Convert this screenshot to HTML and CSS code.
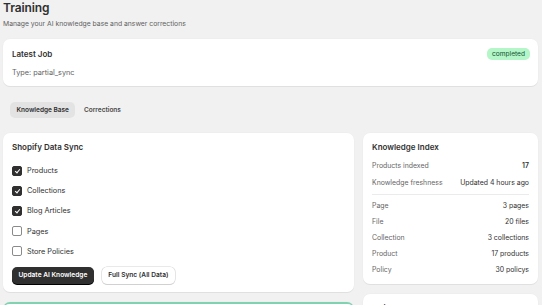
FILE: index.html
```html
<!DOCTYPE html>
<html lang="en">
<head>
  <meta charset="UTF-8">
  <title>Training</title>
  <link rel="stylesheet" href="styles.css">
</head>
<body>
  <div class="page">
    <div class="page-header">
      <h1>Training</h1>
      <p class="subtitle">Manage your AI knowledge base and answer corrections</p>
    </div>

    <div class="card job-card">
      <div class="card-head">
        <h2 class="card-title">Latest Job</h2>
        <span class="badge">completed</span>
      </div>
      <p class="muted">Type: partial_sync</p>
    </div>

    <div class="tabs">
      <button class="tab active">Knowledge Base</button>
      <button class="tab">Corrections</button>
    </div>

    <div class="layout">
      <div class="column">
        <div class="card">
          <h2 class="card-title">Shopify Data Sync</h2>
          <ul class="checks">
            <li><span class="box checked"></span>Products</li>
            <li><span class="box checked"></span>Collections</li>
            <li><span class="box checked"></span>Blog Articles</li>
            <li><span class="box"></span>Pages</li>
            <li><span class="box"></span>Store Policies</li>
          </ul>
          <div class="actions">
            <button class="btn primary">Update AI Knowledge</button>
            <button class="btn">Full Sync (All Data)</button>
          </div>
        </div>
        <div class="card banner"></div>
      </div>

      <div class="column">
        <div class="card index-card">
          <h2 class="card-title">Knowledge Index</h2>
          <dl class="stats">
            <div class="stat"><dt>Products indexed</dt><dd class="strong">17</dd></div>
            <div class="stat"><dt>Knowledge freshness</dt><dd>Updated 4 hours ago</dd></div>
          </dl>
          <hr class="divider">
          <dl class="stats compact">
            <div class="stat"><dt>Page</dt><dd>3 pages</dd></div>
            <div class="stat"><dt>File</dt><dd>20 files</dd></div>
            <div class="stat"><dt>Collection</dt><dd>3 collections</dd></div>
            <div class="stat"><dt>Product</dt><dd>17 products</dd></div>
            <div class="stat"><dt>Policy</dt><dd>30 policys</dd></div>
          </dl>
        </div>
        <div class="card insights">
          <h2 class="card-title">Insights</h2>
        </div>
      </div>
    </div>
  </div>
</body>
</html>
```

FILE: styles.css
```css
body{
  margin: 0;
  font-family: Inter, "Liberation Sans", sans-serif;
  color: #303030;
  background: #f1f1f1;
  overflow: hidden;
}
.page{
  padding: 0 4px 0 3px;
}
h1{
  margin: 0;
  font-size: 12px;
  font-weight: 600;
  line-height: 16px;
  letter-spacing: -0.1px;
}
.subtitle{
  margin: 3px 0 0;
  font-size: 6.8px;
  color: #616161;
}
.card{
  background: #fff;
  border-radius: 7px;
  box-shadow: 0 1px 0 #e0e0e0, 0 0 0 0.5px #ececec;
  padding: 9px 9px 8px;
}
.job-card{
  margin-top: 11px;
  padding-bottom: 9px;
}
.card-head{
  display: flex;
  justify-content: space-between;
  align-items: center;
}
.card-title{
  margin: 0;
  font-size: 8px;
  font-weight: 600;
  line-height: 11px;
}
.muted{
  margin: 8px 0 0;
  font-size: 7.3px;
  color: #616161;
}
.badge{
  font-size: 6.6px;
  background: #b4f6c7;
  color: #0c5132;
  padding: 2px 5px;
  border-radius: 5px;
  margin-right: -1px;
}
.tabs{
  display: flex;
  gap: 2px;
  margin: 16px 0 0 7px;
}
.tab{
  font-family: inherit;
  font-size: 6.5px;
  font-weight: 600;
  color: #4a4a4a;
  border: 0;
  background: none;
  padding: 4px 6.5px;
  border-radius: 5px;
  line-height: 8px;
}
.tab.active{
  background: #e3e3e3;
  color: #303030;
}
.layout{
  display: grid;
  grid-template-columns: 351px 1fr;
  gap: 9px;
  margin-top: 15px;
}
.column{
  display: flex;
  flex-direction: column;
  gap: 10px;
}
.checks{
  list-style: none;
  margin: 12px 0 0;
  padding: 0;
  display: flex;
  flex-direction: column;
  gap: 9.2px;
}
.checks li{
  display: flex;
  align-items: center;
  gap: 5px;
  font-size: 7.3px;
  line-height: 11px;
  color: #303030;
}
.box{
  width: 8px;
  height: 8px;
  border: 0.8px solid #8a8a8a;
  border-radius: 2px;
  background: #fff;
  position: relative;
}
.box.checked{
  background: #303030;
  border-color: #303030;
}
.box.checked::after{
  content: "";
  position: absolute;
  left: 2.6px;
  top: 1px;
  width: 2px;
  height: 4px;
  border: solid #fff;
  border-width: 0 1.2px 1.2px 0;
  transform: rotate(40deg);
}
.actions{
  display: flex;
  gap: 8px;
  margin-top: 10px;
}
.btn{
  font-family: inherit;
  font-size: 6.6px;
  font-weight: 600;
  line-height: 9px;
  padding: 4px 6.5px;
  border-radius: 5px;
  background: #fff;
  color: #303030;
  border: 0;
  box-shadow: 0 0 0 0.6px #d4d4d4, 0 1px 0 #cfcfcf;
}
.btn.primary{
  background: #303030;
  color: #fff;
  box-shadow: 0 1px 0 #000;
}
.banner{
  border-top: 2px solid #7fd3b1;
  height: 30px;
  padding: 0;
}
.stats{
  margin: 0;
}
.stat{
  display: flex;
  justify-content: space-between;
  font-size: 6.9px;
  line-height: 10px;
  margin-top: 7px;
}
.stats:first-of-type .stat:first-child{
  margin-top: 8px;
}
.stat dt{
  color: #666;
}
.stat dd{
  margin: 0;
  color: #303030;
}
.stat dd.strong{
  font-weight: 600;
}
.compact .stat{
  margin-top: 6px;
}
.compact .stat:first-child{
  margin-top: 6px;
}
.divider{
  border: 0;
  border-top: 1px solid #ebebeb;
  margin: 6px 0 0;
}
.index-card{
  padding-bottom: 9px;
}
```
